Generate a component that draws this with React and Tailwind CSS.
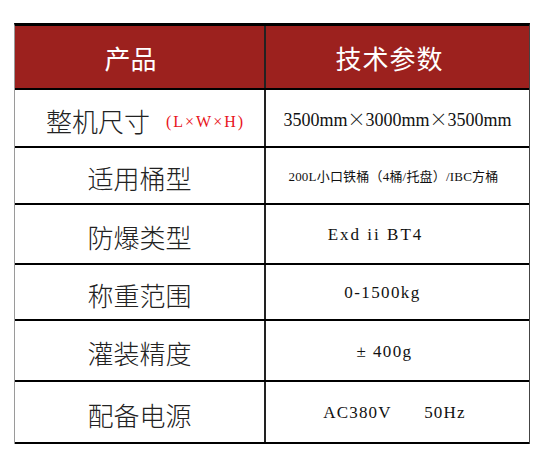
import React from 'react';

const rows = [
  {
    h: 'h-[58px]',
    name: '整机尺寸',
    extra: '(L×W×H)',
    value: (
      <span className="text-[18px] font-['Liberation_Serif','Noto_Sans_CJK_SC',serif]">
        3500mm<span className="font-['Noto_Sans_CJK_SC',sans-serif] font-light">×</span>3000mm
        <span className="font-['Noto_Sans_CJK_SC',sans-serif] font-light">×</span>3500mm
      </span>
    ),
  },
  {
    h: 'h-[57px]',
    name: '适用桶型',
    value: (
      <span className="text-[13px] tracking-[0.2px] pr-[8px] font-['Liberation_Serif','Noto_Sans_CJK_SC',serif]">
        200L小口铁桶（4桶/托盘）/IBC方桶
      </span>
    ),
  },
  {
    h: 'h-[60px]',
    name: '防爆类型',
    value: (
      <span className="text-[17px] tracking-[2px] pr-[44px] font-['Liberation_Serif',serif]">Exd ii BT4</span>
    ),
  },
  {
    h: 'h-[56px]',
    name: '称重范围',
    value: (
      <span className="text-[17px] tracking-[1.4px] pr-[30px] font-['Liberation_Serif',serif]">0-1500kg</span>
    ),
  },
  {
    h: 'h-[61px]',
    name: '灌装精度',
    value: (
      <span className="text-[17px] tracking-[1.4px] pr-[26px] font-['Liberation_Serif',serif]">± 400g</span>
    ),
  },
  {
    h: 'h-[62px]',
    name: '配备电源',
    value: (
      <span className="text-[17px] tracking-[1.2px] whitespace-pre pr-[6px] font-['Liberation_Serif',serif]">
        {'AC380V      50Hz'}
      </span>
    ),
  },
];

export default function App() {
  return (
    <div className="w-[545px] h-[459px] bg-white overflow-hidden">
      <div className="ml-[14px] pt-[23px]">
        <div className="w-[516px] border-t-[3px] border-black border-l border-l-[#9a9a9a] border-r border-r-[#444]">
          {/* header */}
          <div className="flex h-[64px] bg-[#9c211e] border-b-2 border-black text-white text-[26px] font-['Noto_Sans_CJK_SC',sans-serif]">
            <div className="w-[251px] border-r-2 border-[#222] flex items-center justify-center pr-[18px]">
              产品
            </div>
            <div className="flex-1 flex items-center justify-center pr-[16px] tracking-[1px]">技术参数</div>
          </div>

          {rows.map((r) => (
            <div key={r.name} className={`flex ${r.h} border-b-2 border-black text-[#111]`}>
              <div
                className={`w-[251px] border-r-2 border-[#222] flex items-center justify-center pt-[4px] ${
                  r.extra ? 'pl-[12px]' : ''
                }`}
              >
                <span className="text-[26px] font-light text-[#222] font-['Noto_Sans_CJK_SC',sans-serif]">
                  {r.name}
                </span>
                {r.extra && (
                  <span className="text-[16px] tracking-[2px] text-[#e8141b] ml-[16px] mt-[4px] font-['Liberation_Serif',serif]">
                    {r.extra}
                  </span>
                )}
              </div>
              <div className="flex-1 flex items-center justify-center pt-[2px]">{r.value}</div>
            </div>
          ))}
        </div>
      </div>
    </div>
  );
}
